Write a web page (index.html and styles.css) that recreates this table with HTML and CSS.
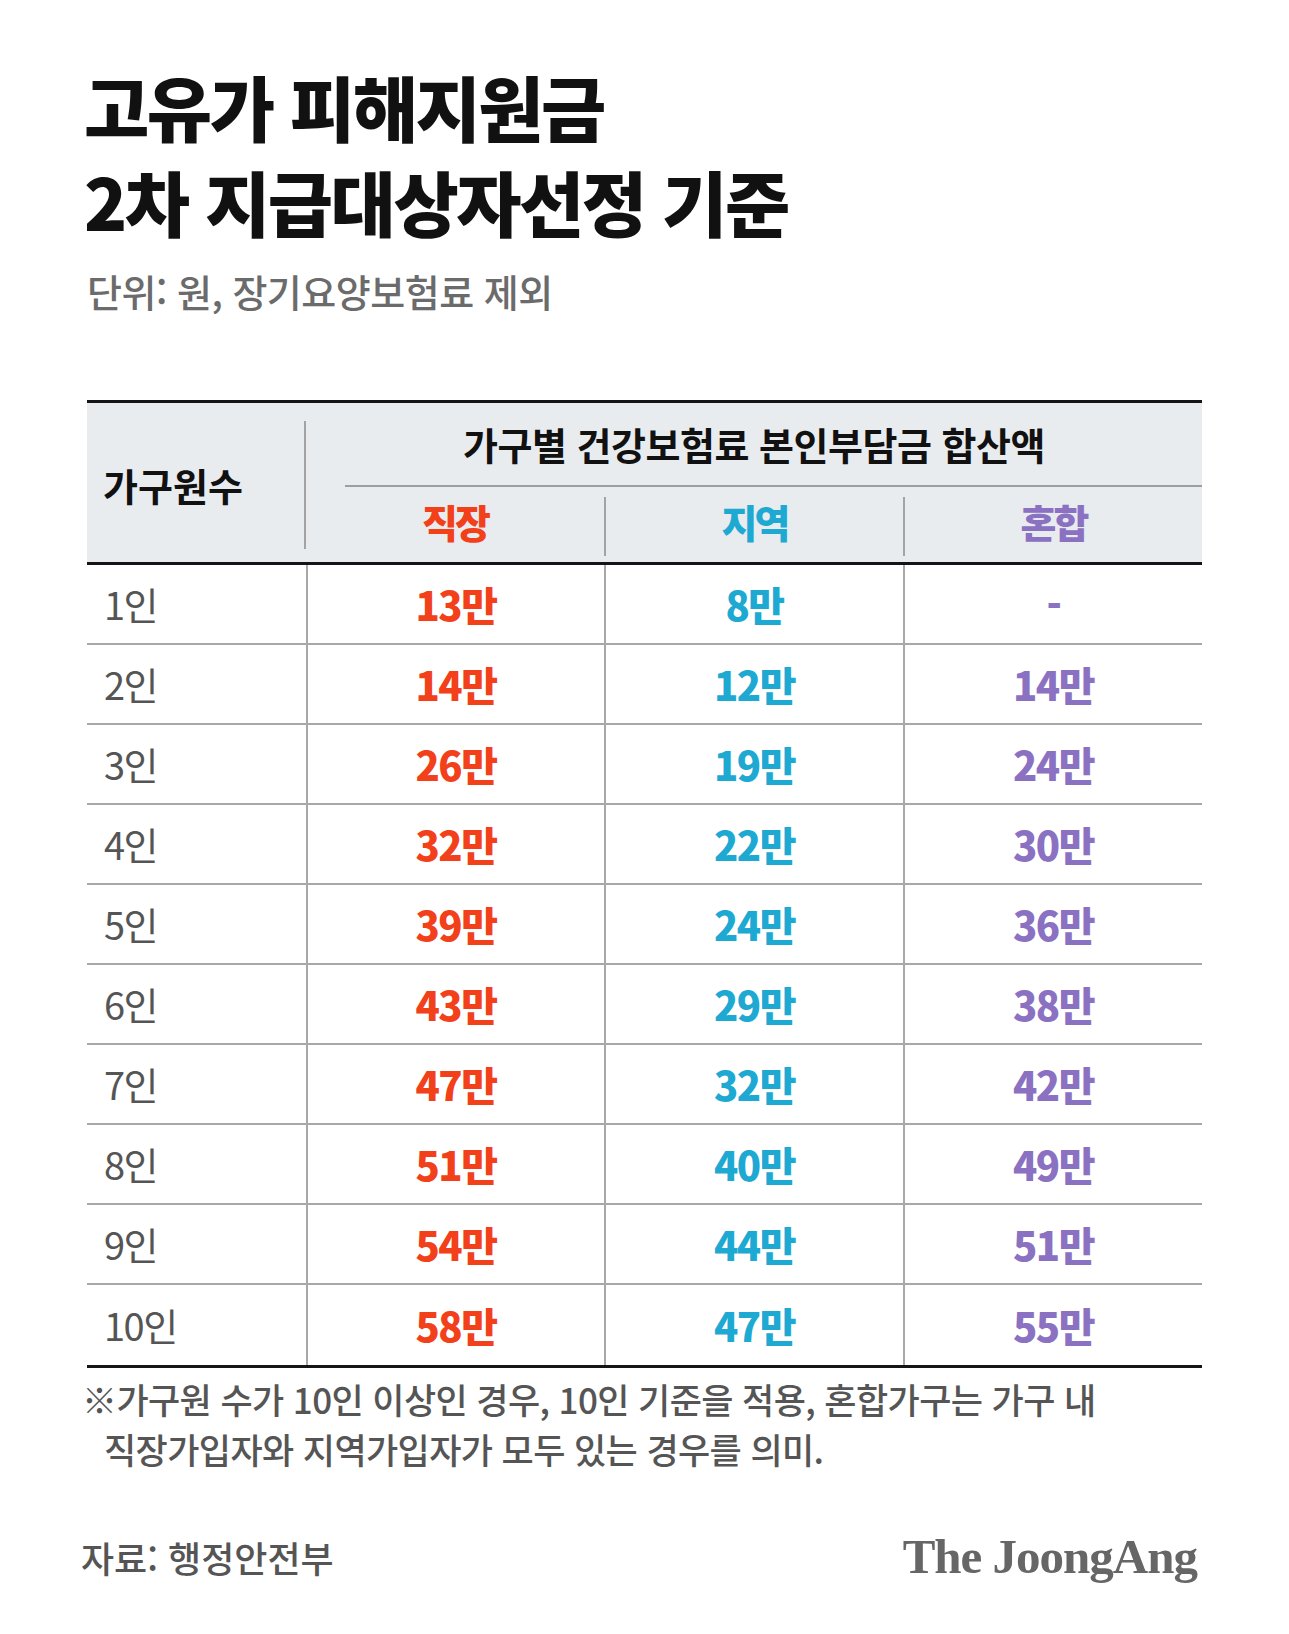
FILE: index.html
```html
<!DOCTYPE html>
<html lang="ko">
<head>
<meta charset="utf-8">
<title>고유가 피해지원금 2차 지급대상자 선정 기준</title>
<link rel="stylesheet" href="styles.css">
</head>
<body>
<div class="page">
  <h1 class="title">고유가 피해지원금<br>2차 지급대상자선정 기준</h1>
  <p class="subtitle">단위: 원, 장기요양보험료 제외</p>

  <div class="table">
    <div class="thead">
      <div class="th-label">가구원수</div>
      <div class="th-group">
        <div class="th-title">가구별 건강보험료 본인부담금 합산액</div>
        <div class="th-rule"></div>
        <div class="th-subs">
          <div class="th-sub c-red">직장</div>
          <div class="th-sub c-cyan">지역</div>
          <div class="th-sub c-purple">혼합</div>
        </div>
      </div>
    </div>

    <div class="row"><div class="cell label">1인</div><div class="cell num c-red">13만</div><div class="cell num c-cyan">8만</div><div class="cell num c-purple">-</div></div>
    <div class="row"><div class="cell label">2인</div><div class="cell num c-red">14만</div><div class="cell num c-cyan">12만</div><div class="cell num c-purple">14만</div></div>
    <div class="row"><div class="cell label">3인</div><div class="cell num c-red">26만</div><div class="cell num c-cyan">19만</div><div class="cell num c-purple">24만</div></div>
    <div class="row"><div class="cell label">4인</div><div class="cell num c-red">32만</div><div class="cell num c-cyan">22만</div><div class="cell num c-purple">30만</div></div>
    <div class="row"><div class="cell label">5인</div><div class="cell num c-red">39만</div><div class="cell num c-cyan">24만</div><div class="cell num c-purple">36만</div></div>
    <div class="row"><div class="cell label">6인</div><div class="cell num c-red">43만</div><div class="cell num c-cyan">29만</div><div class="cell num c-purple">38만</div></div>
    <div class="row"><div class="cell label">7인</div><div class="cell num c-red">47만</div><div class="cell num c-cyan">32만</div><div class="cell num c-purple">42만</div></div>
    <div class="row"><div class="cell label">8인</div><div class="cell num c-red">51만</div><div class="cell num c-cyan">40만</div><div class="cell num c-purple">49만</div></div>
    <div class="row"><div class="cell label">9인</div><div class="cell num c-red">54만</div><div class="cell num c-cyan">44만</div><div class="cell num c-purple">51만</div></div>
    <div class="row"><div class="cell label">10인</div><div class="cell num c-red">58만</div><div class="cell num c-cyan">47만</div><div class="cell num c-purple">55만</div></div>
  </div>

  <p class="note">※가구원 수가 10인 이상인 경우, 10인 기준을 적용, 혼합가구는 가구 내<br>직장가입자와 지역가입자가 모두 있는 경우를 의미.</p>

  <div class="footer">
    <span class="source">자료: 행정안전부</span>
    <span class="logo">The JoongAng</span>
  </div>
</div>
</body>
</html>
```

FILE: styles.css
```css
html, body {
  margin: 0;
  padding: 0;
  background: #ffffff;
}

body {
  font-family: "Noto Sans CJK KR", "Noto Sans", sans-serif;
  color: #111111;
}

.page {
  width: 1289px;
  height: 1634px;
  box-sizing: border-box;
  padding: 58px 87px 0 87px;
  overflow: hidden;
}

.title {
  margin: 0 0 0 -3px;
  font-size: 71px;
  font-weight: 900;
  line-height: 95px;
  letter-spacing: -2.5px;
  color: #111111;
}

.subtitle {
  margin: 18px 0 0;
  font-size: 38px;
  line-height: 50px;
  font-weight: 500;
  letter-spacing: -0.5px;
  color: #6b6b6b;
}

.table {
  margin-top: 84px;
  width: 1115px;
  border-top: 3px solid #151515;
  border-bottom: 3px solid #151515;
}

.thead {
  display: flex;
  height: 162px;
  box-sizing: border-box;
  background: #e8ecef;
  border-bottom: 3px solid #151515;
}

.th-label {
  width: 219px;
  box-sizing: border-box;
  margin: 18px 0 13px;
  padding-left: 16px;
  display: flex;
  align-items: center;
  border-right: 2px solid #a3a3a3;
  font-size: 38px;
  font-weight: 700;
  letter-spacing: 0;
  line-height: 1;
}

.th-group {
  flex: 1;
  display: flex;
  flex-direction: column;
}

.th-title {
  height: 82px;
  display: flex;
  align-items: center;
  justify-content: center;
  font-size: 38px;
  font-weight: 700;
  line-height: 1;
  letter-spacing: -0.5px;
}

.th-rule {
  height: 2px;
  margin-left: 39px;
  background: #9e9e9e;
}

.th-subs {
  flex: 1;
  display: grid;
  grid-template-columns: 298px 299px 1fr;
}

.th-sub {
  margin: 10px 0 6px;
  padding-bottom: 10px;
  display: flex;
  align-items: center;
  justify-content: center;
  font-size: 39px;
  font-weight: 900;
  letter-spacing: -3px;
  line-height: 1;
}

.th-sub + .th-sub {
  border-left: 2px solid #a3a3a3;
}

.row {
  display: grid;
  grid-template-columns: 219px 298px 299px 1fr;
  height: 80px;
  box-sizing: border-box;
  border-bottom: 2px solid #a8a8a8;
}

.row:last-child {
  border-bottom: none;
}

.cell {
  display: flex;
  align-items: center;
  line-height: 1;
}

.cell + .cell {
  border-left: 2px solid #a8a8a8;
}

.label {
  padding-left: 17px;
  font-size: 38px;
  font-weight: 400;
  letter-spacing: -1.5px;
  color: #555555;
}

.num {
  justify-content: center;
  font-size: 40px;
  font-weight: 900;
  letter-spacing: -1.5px;
}

.c-red { color: #f2401b; }
.c-cyan { color: #1ea9d3; }
.c-purple { color: #8b71c2; }

.note {
  margin: 6px 0 0 -5px;
  padding-left: 22px;
  text-indent: -22px;
  font-size: 35px;
  line-height: 50px;
  font-weight: 500;
  letter-spacing: -0.6px;
  color: #555555;
}

.footer {
  margin: 54px 0 0 -6px;
  width: 1116px;
  display: flex;
  justify-content: space-between;
  align-items: baseline;
}

.source {
  font-size: 36px;
  line-height: 50px;
  font-weight: 500;
  color: #555555;
  letter-spacing: 0;
}

.logo {
  font-family: "Liberation Serif", "Times New Roman", serif;
  font-size: 49px;
  font-weight: 700;
  letter-spacing: -1px;
  color: #666666;
}
```
